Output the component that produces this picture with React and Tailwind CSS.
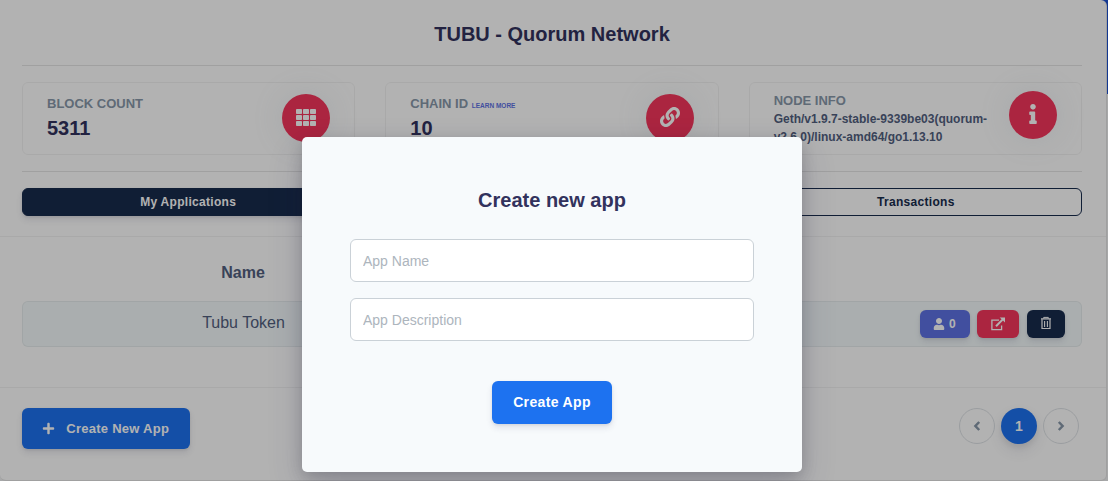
import React from "react";
import { FaLink, FaInfo, FaUser, FaPlus } from "react-icons/fa";

const ICON_BG =
  "flex size-12 shrink-0 items-center justify-center rounded-full bg-[#f5365c] text-white shadow-[0_0_32px_rgba(136,152,170,0.15)]";
const BTN_SHADOW = "shadow-[0_4px_6px_rgba(50,50,93,0.11),0_1px_3px_rgba(0,0,0,0.08)]";

function GridIcon() {
  const cells = [0, 1, 2];
  return (
    <svg className="-mt-px" width="20" height="17" viewBox="0 0 20 17" fill="currentColor">
      {cells.map((r) =>
        cells.map((c) => (
          <rect key={`${r}-${c}`} x={c * 7} y={r * 6} width="6" height="5" rx="0.8" />
        ))
      )}
    </svg>
  );
}

function ExternalIcon() {
  return (
    <svg className="mr-px -mt-px" width="14" height="14" viewBox="0 0 14 14" fill="none" stroke="currentColor">
      <path d="M8 3.1H0.9V12.6H10.6V8.6" strokeWidth="1.3" />
      <path d="M5 9.2L11.8 2.4" strokeWidth="2" />
      <path d="M8.7 0.4H14V5.6Z" fill="currentColor" stroke="none" />
    </svg>
  );
}

function TrashIcon() {
  return (
    <svg className="-mt-0.5" width="12" height="14" viewBox="0 0 12 14" fill="none" stroke="currentColor">
      <path d="M1 2.9H11" strokeWidth="1.3" />
      <path d="M3.7 2.6V1.4H8.3V2.6" strokeWidth="1" />
      <path d="M2 3.2V12.5H10V3.2" strokeWidth="1.2" />
      <path d="M4.6 5V10.9M7.4 5V10.9" strokeWidth="1.1" />
    </svg>
  );
}

function Chevron({ d }) {
  return (
    <svg className="-mt-px" width="8" height="10" viewBox="0 0 8 10" fill="none" stroke="currentColor" strokeWidth="2.5">
      <path d={d} />
    </svg>
  );
}

function StatCard({ children, icon, top }) {
  return (
    <div className="flex h-[73px] items-start justify-between rounded-md border border-black/5 px-6">
      <div className={top ? "pt-[9px]" : "pt-3"}>{children}</div>
      <div className={top ? "pt-2" : "pt-[11px]"}>
        <div className={ICON_BG}>{icon}</div>
      </div>
    </div>
  );
}

const LABEL = "h-[18px] text-[13px] leading-[18px] font-bold text-[#8898aa]";
const VALUE = "pt-[2px] text-[20px] leading-[26px] font-bold text-[#32325d]";
const TAB =
  "flex h-7 items-center justify-center rounded-md border border-[#172b4d] text-[12px] font-bold tracking-[0.3px]";

function Dashboard() {
  return (
    <div className="flex h-[481px] w-[1107px] flex-col rounded-r-md rounded-bl-md border-r border-b border-black/10 bg-white">
      <header className="h-[237px] border-b border-black/5 px-[22px]">
        <h1 className="h-[65px] w-[1060px] pt-[19px] text-center text-[20px] leading-[30px] font-bold text-[#32325d]">
          TUBU - Quorum Network
        </h1>
        <div className="w-[1060px] border-t border-black/10 pt-4">
          <div className="grid grid-cols-3 gap-[30px]">
            <StatCard icon={<GridIcon />}>
              <div className={LABEL}>BLOCK COUNT</div>
              <div className={VALUE}>5311</div>
            </StatCard>
            <StatCard icon={<FaLink size={20} className="-mt-0.5" />}>
              <div className={LABEL}>
                CHAIN ID <span className="text-[6.5px] leading-none text-[#5e72e4]">LEARN MORE</span>
              </div>
              <div className={VALUE}>10</div>
            </StatCard>
            <StatCard top icon={<FaInfo size={20} className="-mt-0.5" />}>
              <div className={LABEL}>NODE INFO</div>
              <div className="text-[12px] leading-[18px] font-bold whitespace-nowrap text-[#525f7f]">
                Geth/v1.9.7-stable-9339be03(quorum-
                <br />
                v2.6.0)/linux-amd64/go1.13.10
              </div>
            </StatCard>
          </div>
          <nav className="mt-4 grid grid-cols-3 gap-[30px] border-t border-black/10 pt-4">
            <div className={`${TAB} ${BTN_SHADOW} bg-[#172b4d] pr-px text-white`}>My Applications</div>
            <div className={`${TAB} text-[#172b4d]`} />
            <div className={`${TAB} pl-px text-[#172b4d]`}>Transactions</div>
          </nav>
        </div>
      </header>

      <section className="h-[151px] w-full border-b border-black/5 pl-[22px] text-[16px] text-[#525f7f]">
        <div className="h-16 pt-6">
          <div className="w-[442px] text-center leading-6 font-bold">Name</div>
        </div>
        <div className="flex h-[46px] w-[1060px] items-start justify-between rounded-md border border-black/5 bg-[#f4fafb] pr-4">
          <div className="w-[441px] pt-[9px] text-center leading-6">Tubu Token</div>
          <div className="flex pt-2 text-white">
            <div className={`mr-[7px] flex h-7 w-[50px] items-center justify-center gap-[3.5px] rounded-md bg-[#5e72e4] pr-px text-[12px] font-bold ${BTN_SHADOW}`}>
              <FaUser size={12} className="-mt-px" />0
            </div>
            <div className={`mr-2 flex h-7 w-[42px] items-center justify-center rounded-md bg-[#f5365c] ${BTN_SHADOW}`}>
              <ExternalIcon />
            </div>
            <div className={`flex h-7 w-[38px] items-center justify-center rounded-md bg-[#172b4d] ${BTN_SHADOW}`}>
              <TrashIcon />
            </div>
          </div>
        </div>
      </section>

      <footer className="flex w-full items-start justify-between pt-5 pr-[27px] pl-[22px]">
        <div className={`flex h-[41px] w-[168px] items-center rounded-md bg-[#1d72f0] pl-5 text-[13px] font-bold tracking-[0.26px] whitespace-nowrap text-white ${BTN_SHADOW}`}>
          <FaPlus size={13} className="mr-[11.3px]" />
          Create New App
        </div>
        <div className="flex gap-1.5 text-[#8898aa]">
          <div className="flex size-9 items-center justify-center rounded-full border border-[#dee2e6]">
            <Chevron d="M6.2 1L2.4 5L6.2 9" />
          </div>
          <div className="flex size-9 items-center justify-center rounded-full bg-[#1d72f0] text-[14px] font-bold text-white shadow-[0_7px_14px_rgba(50,50,93,0.1),0_3px_6px_rgba(0,0,0,0.08)]">
            1
          </div>
          <div className="flex size-9 items-center justify-center rounded-full border border-[#dee2e6]">
            <Chevron d="M1.8 1L5.6 5L1.8 9" />
          </div>
        </div>
      </footer>
    </div>
  );
}

function CreateAppModal() {
  const input =
    "block h-[43px] w-full rounded-md border border-[#cad1d7] bg-white px-3 text-[14px] text-[#525f7f] placeholder:text-[#adb5bd]";
  return (
    <div className="absolute inset-0 flex justify-center bg-black/30 pt-[137px] pr-1">
      <div className="h-[335px] w-[500px] rounded-[5px] bg-[#f7fafc] px-12 pt-12 shadow-[0_15px_35px_rgba(50,50,93,0.2),0_5px_15px_rgba(0,0,0,0.17)]">
        <h2 className="text-center text-[20px] leading-[30px] font-bold text-[#32325d]">Create new app</h2>
        <div className="mt-6 flex flex-col gap-4">
          <input className={input} placeholder="App Name" />
          <input className={input} placeholder="App Description" />
        </div>
        <button className={`mx-auto mt-10 block h-[43px] w-[120px] rounded-md bg-[#1d72f0] text-[14px] font-bold tracking-[0.35px] text-white ${BTN_SHADOW}`}>
          Create App
        </button>
      </div>
    </div>
  );
}

export default function App() {
  return (
    <div className="relative h-[481px] w-[1108px] overflow-hidden bg-[linear-gradient(to_bottom,#1a4fd0_94px,#f0f1f3_94px)] font-['Liberation_Sans',Arial,sans-serif]">
      <Dashboard />
      <CreateAppModal />
    </div>
  );
}
